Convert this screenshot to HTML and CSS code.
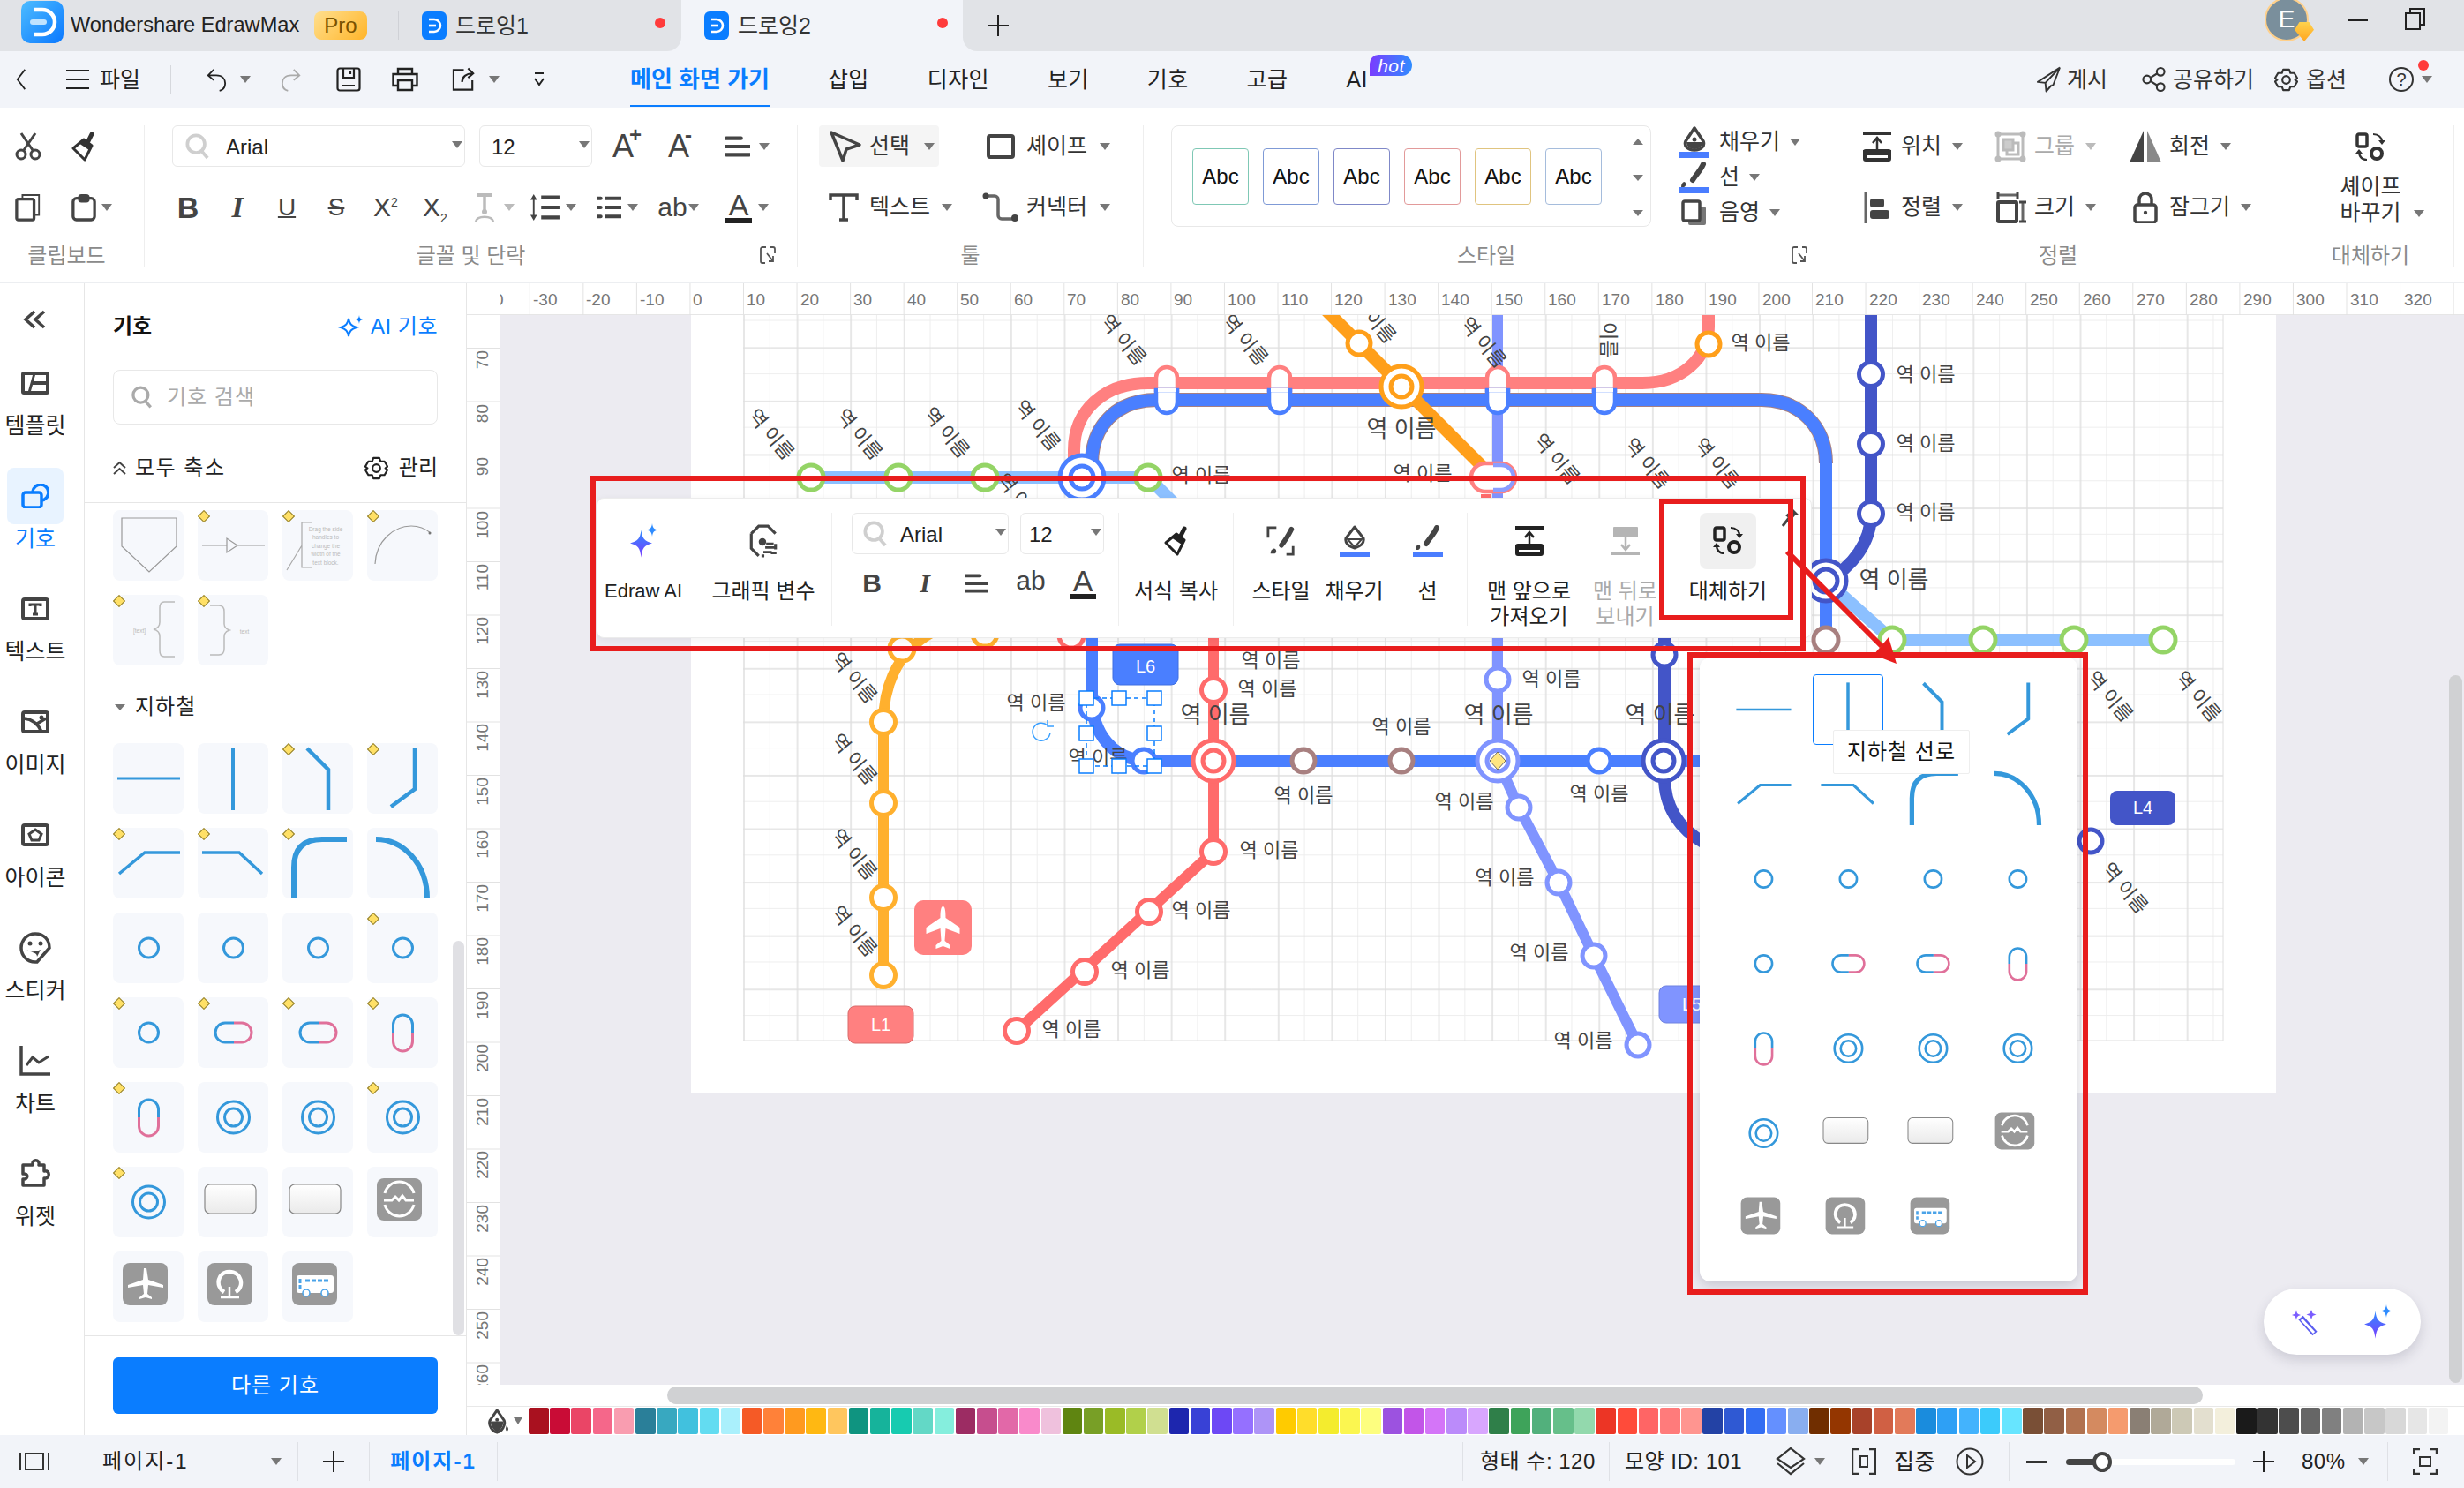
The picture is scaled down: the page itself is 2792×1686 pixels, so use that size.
FILE: index.html
```html
<!DOCTYPE html>
<html lang="ko">
<head>
<meta charset="utf-8">
<title>Wondershare EdrawMax</title>
<link rel="stylesheet" href="styles.css">
</head>
<body>
<svg class="defs" aria-hidden="true">
  <defs>
    <linearGradient id="gLogo" x1="0" y1="0" x2="1" y2="1"><stop offset="0" stop-color="#4dbcff"/><stop offset="1" stop-color="#0a78ff"/></linearGradient>
    <linearGradient id="gAi" x1="0" y1="0" x2="0" y2="1"><stop offset="0" stop-color="#2f8cff"/><stop offset="1" stop-color="#7a3cff"/></linearGradient>
    <linearGradient id="gKey" x1="0" y1="0" x2="0" y2="1"><stop offset="0" stop-color="#fff"/><stop offset="1" stop-color="#eaeaea"/></linearGradient>
  </defs>
  <symbol id="edraw" viewBox="0 0 28 32"><rect width="28" height="32" rx="6" fill="#0a7dff"/><path d="M8 9h6a7 7 0 0 1 0 14H8" fill="none" stroke="#fff" stroke-width="2.6"/><path d="M8 16h8" stroke="#fff" stroke-width="2.6"/></symbol>
  <symbol id="i-back" viewBox="0 0 14 30"><path d="M12 2 2 15l10 13" fill="none" stroke="currentColor" stroke-width="2"/></symbol>
  <symbol id="i-menu" viewBox="0 0 26 24"><path d="M0 2h26M0 12h26M0 22h26" stroke="currentColor" stroke-width="2.2"/></symbol>
  <symbol id="i-undo" viewBox="0 0 26 30"><path d="M10 3 3 10l7 6M3 10h10c8 0 11 5 11 10s-3 8-7 9" fill="none" stroke="currentColor" stroke-width="2"/></symbol>
  <symbol id="i-redo" viewBox="0 0 26 30"><path d="M16 3l7 7-7 6M23 10H13C5 10 2 15 2 20s3 8 7 9" fill="none" stroke="currentColor" stroke-width="2"/></symbol>
  <symbol id="i-save" viewBox="0 0 28 28"><path d="M4 1.5h20a2.5 2.5 0 0 1 2.5 2.5v20a2.500 2.500 0 0 1-2.500 2.500H4A2.500 2.500 0 0 1 1.500 24V4A2.500 2.500 0 0 1 4 1.500ZM8 1.500V12h12V1.500M16 5v3M7 21h14" fill="none" stroke="currentColor" stroke-width="2.200"/></symbol>
  <symbol id="i-print" viewBox="0 0 32 28"><path d="M8 8V2h16v6M8 21H2.500V8h27v13H24M8 15h16v11H8Z" fill="none" stroke="currentColor" stroke-width="2.400"/></symbol>
  <symbol id="i-export" viewBox="0 0 30 28"><path d="M14 3H2v23h22V15M12 17c0-6 5-10 12-10M19 1l6 6-6 5" fill="none" stroke="currentColor" stroke-width="2.200"/></symbol>
  <symbol id="i-more" viewBox="0 0 14 18"><path d="M2 2h10M2 8l5 7 5-7" fill="none" stroke="currentColor" stroke-width="2"/></symbol>
  <symbol id="i-send" viewBox="0 0 28 30"><path d="M27 1 1 18l9 1 1 10 6-7M27 1 10 19M27 1l-8 21-2 0" fill="none" stroke="currentColor" stroke-width="2" stroke-linejoin="round"/></symbol>
  <symbol id="i-share" viewBox="0 0 28 30"><g fill="none" stroke="currentColor" stroke-width="2.200"><circle cx="22" cy="6" r="4.500"/><circle cx="6" cy="15" r="4.500"/><circle cx="22" cy="24" r="4.500"/><path d="m10 13 8-5M10 17l8 5"/></g></symbol>
  <symbol id="i-gear" viewBox="0 0 28 28"><g fill="none" stroke="currentColor" stroke-width="2.200" stroke-linejoin="round"><path d="M10.500 2h7L19 6h4.500L27 12l-2.500 2 2.500 2-3.500 6H19l-1.500 4h-7L9 22H4.500L1 16l2.500-2L1 12l3.500-6H9Z"/><circle cx="14" cy="14" r="4.500"/></g></symbol>
  <symbol id="i-cut" viewBox="0 0 30 32"><g fill="none" stroke="#444" stroke-width="3"><circle cx="7" cy="25" r="5"/><circle cx="23" cy="25" r="5"/><path d="M10 20 23 1M20 20 7 1"/></g></symbol>
  <symbol id="i-brush" viewBox="0 0 32 34"><path d="m25 3-4 8" stroke="currentColor" stroke-width="5" stroke-linecap="round"/><path d="M16 9l9 7-8 16L4 19Z" fill="none" stroke="currentColor" stroke-width="3" stroke-linejoin="round"/><path d="m16 9 9 7-3 5-12-8Z" fill="currentColor"/></symbol>
  <symbol id="i-copy" viewBox="0 0 32 34"><path d="M9 7V2h20v24h-5" fill="none" stroke="#444" stroke-width="2"/><rect x="2" y="7" width="21" height="25" rx="2" fill="none" stroke="#444" stroke-width="3.500"/></symbol>
  <symbol id="i-paste" viewBox="0 0 30 34"><rect x="2" y="6" width="26" height="26" rx="4" fill="none" stroke="#444" stroke-width="3.500"/><rect x="8" y="1" width="14" height="10" rx="4" fill="#444"/></symbol>
  <symbol id="i-search" viewBox="0 0 30 32"><g fill="none" stroke="currentColor" stroke-width="4"><circle cx="13" cy="13" r="10.500"/><path d="m20 22 7 8"/></g></symbol>
  <symbol id="i-align" viewBox="0 0 30 26"><path d="M1 3h18M1 13h28M1 23h28" stroke="#444" stroke-width="4.500" stroke-linecap="round"/></symbol>
  <symbol id="i-lspace" viewBox="0 0 36 34"><path d="M14 5h22M14 17h22M14 29h22" stroke="#444" stroke-width="4.500"/><path d="M5 4v26" stroke="#444" stroke-width="2"/><path d="M1 8l4-7 4 7ZM1 26l4 7 4-7Z" fill="#444"/></symbol>
  <symbol id="i-list" viewBox="0 0 30 30"><path d="M10 4h20M10 15h20M10 26h20" stroke="#444" stroke-width="4.500"/><path d="M0 4h5M0 15h5M0 26h5" stroke="#444" stroke-width="4.500" stroke-linecap="round"/></symbol>
  <symbol id="i-tdir" viewBox="0 0 24 34"><path d="M3 3h18" stroke="#bbb" stroke-width="4"/><path d="M12 3v18" stroke="#bbb" stroke-width="3.500"/><circle cx="12" cy="22" r="3" fill="#bbb"/><path d="M2 33c2-7 18-7 20 0" fill="none" stroke="#bbb" stroke-width="2.500"/></symbol>
  <symbol id="i-cursor" viewBox="0 0 38 38"><path d="M3 3l32 14-15 5-4 13Z" fill="none" stroke="#444" stroke-width="3.500" stroke-linejoin="round"/></symbol>
  <symbol id="i-shape" viewBox="0 0 32 28"><rect x="2" y="2" width="28" height="24" rx="2" fill="none" stroke="#444" stroke-width="4"/></symbol>
  <symbol id="i-text" viewBox="0 0 34 32"><path d="M2 8V2h30v6M17 2v28M12 30h10" fill="none" stroke="#444" stroke-width="3.500"/></symbol>
  <symbol id="i-conn" viewBox="0 0 41 34"><path d="M4 4h10a4 4 0 0 1 4 4v18a4 4 0 0 0 4 4h15" fill="none" stroke="#666" stroke-width="3.500"/><circle cx="4" cy="4" r="3.500" fill="#444"/><circle cx="37" cy="29" r="4" fill="#444"/></symbol>
  <symbol id="i-fill" viewBox="0 0 34 36"><path d="M17 2 27 17c2 5-2 10-10 10S5 22 7 17Z" fill="none" stroke="#444" stroke-width="3.500" stroke-linejoin="round"/><path d="M8 18h18c0 5-4 8-9 8s-9-3-9-8Z" fill="#444"/><circle cx="17" cy="15" r="2.500" fill="#444"/><rect y="29" width="34" height="7" fill="#4a7dff"/></symbol>
  <symbol id="i-nib" viewBox="0 0 26 32"><path d="M11 2 20 15c2 6-3 14-9 15C5 29 0 21 2 15Z" fill="none" stroke="#444" stroke-width="3.200" stroke-linejoin="round"/><path d="M3 16h16c0 6-4 12-8 13-4-1-8-7-8-13Z" fill="#444"/><circle cx="11" cy="14" r="2.200" fill="#444"/><path d="M23 21c2 3 3 5 1 7-2 1-3-3-1-7Z" fill="#444"/></symbol>
  <symbol id="i-line" viewBox="0 0 34 36"><path d="M27 3C24 10 18 16 15 21" fill="none" stroke="#444" stroke-width="6" stroke-linecap="round"/><path d="M5 23c3 0 3 5 0 6H2c0-3 1-5 3-6Z" fill="#444"/><rect y="29" width="34" height="7" fill="#4a7dff"/></symbol>
  <symbol id="i-shadow" viewBox="0 0 30 30"><rect x="8" y="8" width="20" height="21" rx="2" fill="#777"/><rect x="2" y="2" width="19" height="22" rx="2" fill="#fff" stroke="#444" stroke-width="3.500"/></symbol>
  <symbol id="i-front" viewBox="0 0 32 34"><rect width="32" height="4" fill="currentColor"/><path d="M16 24V8M11 13l5-6 5 6" fill="none" stroke="currentColor" stroke-width="2.500"/><rect x="2" y="22" width="28" height="10" rx="1" fill="#fff" stroke="currentColor" stroke-width="4"/><rect y="21" width="32" height="6" fill="currentColor"/></symbol>
  <symbol id="i-back2" viewBox="0 0 32 34"><rect x="2" y="1" width="28" height="12" rx="1" fill="currentColor"/><path d="M16 12v14M11 21l5 6 5-6" fill="none" stroke="currentColor" stroke-width="2.500"/><rect y="29" width="32" height="4" fill="currentColor"/></symbol>
  <symbol id="i-group" viewBox="0 0 36 36"><g fill="none" stroke="#bbb" stroke-width="3"><rect x="4" y="4" width="28" height="28"/><rect x="10" y="10" width="11" height="12" fill="#ccc"/><path d="M22 14h5v13H14v-4"/></g><g fill="#bbb"><circle cx="4" cy="4" r="3.500"/><circle cx="32" cy="4" r="3.500"/><circle cx="4" cy="32" r="3.500"/><circle cx="32" cy="32" r="3.500"/></g></symbol>
  <symbol id="i-rotate" viewBox="0 0 36 36"><path d="M16 0v36H0Z" fill="#444"/><path d="M20 0v36h16Z" fill="#888"/></symbol>
  <symbol id="i-alignl" viewBox="0 0 30 36"><path d="M2 0v36" stroke="#666" stroke-width="3"/><rect x="7" y="8" width="16" height="10" rx="3" fill="#444"/><rect x="7" y="21" width="22" height="10" rx="3" fill="#444"/></symbol>
  <symbol id="i-size" viewBox="0 0 32 36"><path d="M2 4h22M30 12v22" stroke="#666" stroke-width="3"/><path d="M2 0v8M24 0v8M26 12h8M26 34h8" stroke="#444" stroke-width="3"/><rect x="2" y="12" width="21" height="22" rx="1" fill="none" stroke="#444" stroke-width="4"/></symbol>
  <symbol id="i-lock" viewBox="0 0 28 36"><path d="M7 16V9a7 7 0 0 1 14 0v7" fill="none" stroke="#444" stroke-width="3.500"/><rect x="2" y="15" width="24" height="20" rx="3" fill="none" stroke="#444" stroke-width="3.500"/><circle cx="14" cy="24" r="2.200" fill="#444"/></symbol>
  <symbol id="i-replace" viewBox="0 0 34 34"><g fill="none" stroke="currentColor"><rect x="2" y="2" width="11" height="14" rx="2" stroke-width="3.500"/><circle cx="24" cy="24" r="6" stroke-width="4"/><path d="M20 2c6 0 10 4 10 8M4 21c0 6 3 10 9 10" stroke-width="2.200"/></g><path d="m26 9 4 5 4-5ZM0 24l4-5 4 5Z" fill="currentColor"/></symbol>
  <symbol id="i-launch" viewBox="0 0 18 22"><path d="M7 2H3a2 2 0 0 0-2 2v14a2 2 0 0 0 2 2h3M12 2h3a2 2 0 0 1 2 2v5" fill="none" stroke="#555" stroke-width="1.800"/><path d="m8 9 7 9M15 12v6h-5" fill="none" stroke="#555" stroke-width="1.800"/></symbol>
  <symbol id="i-var" viewBox="0 0 30 36"><path d="M2 10 10 2h10l8 8M28 21v6M2 10v16l8 8M13 34h3" fill="none" stroke="#444" stroke-width="3"/><circle cx="14" cy="19" r="4" fill="#444"/><path d="M17 25h12M23 31h6M18 21h8M24 30H15" stroke="#444" stroke-width="2.500"/></symbol>
  <symbol id="i-style" viewBox="0 0 36 36"><path d="M12 2H2v12M24 34h8V24" fill="none" stroke="#444" stroke-width="3"/><path d="M30 4c-3 6-7 13-12 19" fill="none" stroke="#444" stroke-width="6" stroke-linecap="round"/><path d="M9 27c3 0 4 5 1 6H5c0-3 1-5 4-6Z" fill="#444"/></symbol>
  <symbol id="i-fillf" viewBox="0 0 34 36"><path d="M17 2 27 15c1 5-3 9-10 11C10 24 6 20 7 15Z" fill="none" stroke="#444" stroke-width="3" stroke-linejoin="round"/><path d="M9 16h16l-8 9Z" fill="none" stroke="#444" stroke-width="2"/><rect y="31" width="34" height="5" fill="#4a7dff"/></symbol>
  <symbol id="i-linef" viewBox="0 0 34 36"><path d="M27 3C24 10 18 16 15 21" fill="none" stroke="#444" stroke-width="6" stroke-linecap="round"/><path d="M6 22c3 0 3 5 0 6H3c0-3 1-5 3-6Z" fill="#444"/><rect y="31" width="34" height="5" fill="#4a7dff"/></symbol>
  <symbol id="i-pin" viewBox="0 0 20 24"><path d="M1 22 8 13" stroke="#444" stroke-width="3"/><path d="M4 10l6-5 1-4 8 8-4 1-5 6-1-2Z" fill="#444"/></symbol>
  <symbol id="i-star" viewBox="0 0 32 32"><path d="M14 6c1 8 3 10 10 12-7 2-9 4-10 13-1-9-3-11-10-13 7-2 9-4 10-12Z" fill="url(#gAi)"/><path d="M24 0c.5 4 1.500 5 5 6-3.500 1-4.500 2-5 6-.5-4-1.500-5-5-6 3.500-1 4.500-2 5-6Z" fill="#2f8cff"/></symbol>
  <symbol id="i-aistar" viewBox="0 0 32 26"><path d="M14 4c1 6 3 8 9 10-6 2-8 4-9 10-1-6-3-8-9-10 6-2 8-4 9-10Z" fill="none" stroke="#0a7dff" stroke-width="2"/><path d="M26 0c.4 3 1 4 4 5-3 1-3.600 2-4 5-.4-3-1-4-4-5 3-1 3.600-2 4-5Z" fill="#0a7dff"/></symbol>
  <symbol id="i-magic" viewBox="0 0 36 36"><path d="M14 13 30 31" stroke="#5a5cf0" stroke-width="7"/><path d="M15 15 29 30" stroke="#fff" stroke-width="3"/><path d="M9 4c.5 4 1.500 5 5 6-3.500 1-4.500 2-5 6-.5-4-1.500-5-5-6 3.500-1 4.500-2 5-6ZM26 4l1.500 4 4 1.500-4 1.500-1.500 4-1.500-4-4-1.500 4-1.500Z" fill="#7a5cff"/></symbol>
  <symbol id="r-tpl" viewBox="0 0 32 26"><rect width="32" height="26" rx="3" fill="#444"/><path d="M4 4h9L8 22H4ZM16 4h12v7H14ZM13 15h15v7H11Z" fill="#fff"/></symbol>
  <symbol id="r-sym" viewBox="0 0 32 28"><path d="M13 9a9 9 0 1 1 10 10" fill="none" stroke="currentColor" stroke-width="3.500"/><rect x="2" y="10" width="21" height="17" rx="3" fill="none" stroke="currentColor" stroke-width="3.500"/></symbol>
  <symbol id="r-text" viewBox="0 0 32 26"><rect x="2" y="2" width="28" height="22" rx="2" fill="none" stroke="#444" stroke-width="4"/><path d="M10 10V8h12v2M16 8v11M13 19h6" fill="none" stroke="#444" stroke-width="3"/></symbol>
  <symbol id="r-img" viewBox="0 0 32 26"><rect x="2" y="2" width="28" height="22" rx="2" fill="none" stroke="#444" stroke-width="4"/><path d="M3 9c10 1 16 6 20 15M18 15l10-6" fill="none" stroke="#444" stroke-width="3.500"/><circle cx="23" cy="8" r="2.500" fill="#444"/></symbol>
  <symbol id="r-icon" viewBox="0 0 32 26"><rect x="2" y="2" width="28" height="22" rx="2" fill="none" stroke="#444" stroke-width="4"/><path d="m16 7 7 5-3 7h-8l-3-7Z" fill="none" stroke="#444" stroke-width="3"/></symbol>
  <symbol id="r-stick" viewBox="0 0 36 36"><path d="M18 34C8 34 2 26 2 18S8 2 18 2s16 7 16 16L20 34Z" fill="none" stroke="#444" stroke-width="3.500"/><circle cx="12" cy="13" r="2.500" fill="#444"/><circle cx="24" cy="13" r="2.500" fill="#444"/><path d="M8 20c5 4 12 2 16 0l-4 8c0-5-5-4-12-8Z" fill="#444"/></symbol>
  <symbol id="r-chart" viewBox="0 0 36 34"><path d="M2 0v32h33" fill="none" stroke="#444" stroke-width="3.500"/><path d="m8 22 7-9 7 6 11-7" fill="none" stroke="#444" stroke-width="3"/></symbol>
  <symbol id="r-widget" viewBox="0 0 34 34"><path d="M9 7h5c-2-7 9-7 7 0h6v7c7-2 7 9 0 8v8H3v-7c6 1 7-7 0-6V7Z" fill="none" stroke="#444" stroke-width="3.500" stroke-linejoin="round"/></symbol>

  <symbol id="s-pent" viewBox="0 0 80 80"><path d="M10 9h62v32L41 70 10 41Z" fill="none" stroke="#999" stroke-width="1.200"/></symbol>
  <symbol id="s-arrow" viewBox="0 0 80 80"><path d="M5 40h28M45 40h31M33 32v16l12-8Z" fill="none" stroke="#999" stroke-width="1.200"/></symbol>
  <symbol id="s-arc" viewBox="0 0 80 80"><path d="M9 61C10 35 30 18 50 18c8 0 16 3 22 8" fill="none" stroke="#999" stroke-width="1.200"/><circle cx="71" cy="26" r="1.500" fill="#777"/></symbol>
  <symbol id="s-l1" viewBox="0 0 80 80"><path d="M5 40h71" fill="none" stroke="#3498db" stroke-width="3"/></symbol>
  <symbol id="s-l2" viewBox="0 0 80 80"><path d="M40 5v71" fill="none" stroke="#3498db" stroke-width="4"/></symbol>
  <symbol id="s-l3" viewBox="0 0 80 80"><path d="m28 6 24 24v46" fill="none" stroke="#3498db" stroke-width="4.500"/></symbol>
  <symbol id="s-l4" viewBox="0 0 80 80"><path d="M54 5v47L27 72" fill="none" stroke="#3498db" stroke-width="4.500"/></symbol>
  <symbol id="s-l5" viewBox="0 0 80 80"><path d="M7 52 36 28h40" fill="none" stroke="#3498db" stroke-width="3.500"/></symbol>
  <symbol id="s-l6" viewBox="0 0 80 80"><path d="M5 28h42l26 24" fill="none" stroke="#3498db" stroke-width="3.500"/></symbol>
  <symbol id="s-l7" viewBox="0 0 80 80"><path d="M13 80V45q0-32 32-32h28" fill="none" stroke="#3498db" stroke-width="6"/></symbol>
  <symbol id="s-l8" viewBox="0 0 80 80"><path d="M10 13c30 0 58 27 58 67" fill="none" stroke="#3498db" stroke-width="6"/></symbol>
  <symbol id="s-c" viewBox="0 0 80 80"><circle cx="40.500" cy="40" r="11" fill="none" stroke="#3498db" stroke-width="3"/></symbol>
  <symbol id="s-ph" viewBox="0 0 80 80"><path d="M41 29H31a11 11 0 0 0 0 22h10" fill="none" stroke="#3498db" stroke-width="3"/><path d="M41 29h9a11 11 0 0 1 0 22h-9" fill="none" stroke="#e0709a" stroke-width="3"/></symbol>
  <symbol id="s-pv" viewBox="0 0 80 80"><path d="M29.500 40V31a11 11 0 0 1 22 0v9" fill="none" stroke="#3498db" stroke-width="3"/><path d="M29.500 40v10a11 11 0 0 0 22 0V40" fill="none" stroke="#e0709a" stroke-width="3"/></symbol>
  <symbol id="s-ring" viewBox="0 0 80 80"><g fill="none" stroke="#3498db" stroke-width="3"><circle cx="40.500" cy="40" r="18"/><circle cx="40.500" cy="40" r="10"/></g></symbol>
  <symbol id="s-key" viewBox="0 0 80 80"><rect x="8" y="20" width="58" height="33" rx="6" fill="url(#gKey)" stroke="#888" stroke-width="1.200"/></symbol>
  <symbol id="s-metro" viewBox="0 0 80 80"><rect x="11" y="13" width="51" height="48" rx="8" fill="#999"/><g fill="none" stroke="#fff" stroke-width="3"><path d="M20 30a17 17 0 0 1 33 0M20 43a17 17 0 0 0 33 0"/><path d="M19 38h9l4-4 4 4 4-5 4 5h9"/></g></symbol>
  <symbol id="s-plane" viewBox="0 0 80 80"><rect x="11" y="13" width="51" height="48" rx="8" fill="#999"/><path d="M35 19h3l2 13 17 6v3l-17-3-1 10 5 4v2l-7-2-7 2v-2l5-4-1-10-17 3v-3l17-6Z" fill="#fff"/></symbol>
  <symbol id="s-rail" viewBox="0 0 80 80"><rect x="11" y="13" width="51" height="48" rx="8" fill="#999"/><path d="M30 46c-11-7-7-23 6-23s18 16 7 23" fill="none" stroke="#fff" stroke-width="4.500"/><path d="M26 52h21M36 40v12" stroke="#fff" stroke-width="2.500"/></symbol>
  <symbol id="s-bus" viewBox="0 0 80 80"><rect x="11" y="13" width="51" height="48" rx="8" fill="#999"/><rect x="16" y="27" width="42" height="20" rx="3" fill="#fff"/><path d="M20 31v11M26 33h28" stroke="#4aa3e8" stroke-width="3" stroke-dasharray="5 2"/><circle cx="27" cy="47" r="4" fill="#fff" stroke="#4aa3e8" stroke-width="1.500"/><circle cx="48" cy="47" r="4" fill="#fff" stroke="#4aa3e8" stroke-width="1.500"/></symbol>
</svg>

<header class="titlebar">
  <div class="tb-left">
    <svg class="app-logo" width="48" height="48" viewBox="0 0 48 48"><rect width="48" height="48" rx="10" fill="url(#gLogo)"/><path d="M14 10h10a14 14 0 0 1 0 28H14" fill="none" stroke="#fff" stroke-width="4.500"/><path d="M13 24h13" stroke="#bfe3ff" stroke-width="6" stroke-linecap="round"/></svg>
    <span class="app-name">Wondershare EdrawMax</span>
    <span class="pro">Pro</span>
    <span class="tb-sep"></span>
    <div class="doc-tab doc-first">
      <svg width="28" height="32"><use href="#edraw"/></svg>
      <span>드로잉1</span>
      <i class="dot"></i>
    </div>
  </div>
  <div class="doc-tab doc-active">
    <svg width="28" height="32"><use href="#edraw"/></svg>
    <span>드로잉2</span>
    <i class="dot"></i>
  </div>
  <div class="tb-right">
    <span class="plus newtab"></span>
    <div class="avatar">E<i class="vip"></i></div>
    <span class="win-min"></span>
    <span class="win-max"></span>
  </div>
</header>

<nav class="menubar">
  <svg class="nb-back" width="12" height="30"><use href="#i-back"/></svg>
  <svg class="nb-menu" width="26" height="24"><use href="#i-menu"/></svg>
  <span class="nb-file">파일</span>
  <span class="nb-sep sep-a"></span>
  <svg class="nb-undo" width="24" height="30"><use href="#i-undo"/></svg>
  <i class="caret c-undo"></i>
  <svg class="nb-redo" width="24" height="30"><use href="#i-redo"/></svg>
  <svg class="nb-save" width="28" height="28"><use href="#i-save"/></svg>
  <svg class="nb-print" width="32" height="28"><use href="#i-print"/></svg>
  <svg class="nb-export" width="29" height="28"><use href="#i-export"/></svg>
  <i class="caret c-export"></i>
  <svg class="nb-more" width="14" height="18"><use href="#i-more"/></svg>
  <span class="nb-sep sep-b"></span>
  <div class="tabs">
    <a class="tab on">메인 화면 가기</a>
    <a class="tab">삽입</a>
    <a class="tab">디자인</a>
    <a class="tab">보기</a>
    <a class="tab">기호</a>
    <a class="tab">고급</a>
    <a class="tab tab-ai">AI<b class="hot">hot</b></a>
  </div>
  <div class="nb-right">
    <svg width="27" height="30"><use href="#i-send"/></svg><span class="nb-t1">게시</span>
    <svg class="nb-share" width="27" height="30"><use href="#i-share"/></svg><span class="nb-t2">공유하기</span>
    <svg class="nb-gear" width="27" height="27"><use href="#i-gear"/></svg><span class="nb-t3">옵션</span>
    <span class="help">?<i class="help-dot"></i></span>
    <i class="caret c-help"></i>
  </div>
</nav>

<section class="ribbon">
  <div class="rg rg-clip">
    <div class="rg-body">
      <div class="rw">
        <svg class="cl-a" width="30" height="32"><use href="#i-cut"/></svg>
        <svg class="cl-b" width="32" height="34"><use href="#i-brush"/></svg>
      </div>
      <div class="rw">
        <svg class="cl-a" width="30" height="32"><use href="#i-copy"/></svg>
        <svg class="cl-c" width="28" height="32"><use href="#i-paste"/></svg>
        <i class="caret cl-car"></i>
      </div>
    </div>
    <div class="rg-label">클립보드</div>
  </div>

  <div class="rg rg-font">
    <div class="rg-body">
      <div class="rw">
        <div class="fld fld-font"><svg class="gs" width="28" height="30"><use href="#i-search"/></svg><span>Arial</span><i class="caret"></i></div>
        <div class="fld fld-size"><span>12</span><i class="caret"></i></div>
        <span class="glyph g-ap">A<sup>+</sup></span>
        <span class="glyph g-am">A<sup>-</sup></span>
        <svg class="g-al" width="28" height="26"><use href="#i-align"/></svg>
        <i class="caret g-alc"></i>
      </div>
      <div class="rw rw-fmt">
        <b class="fmt">B</b>
        <i class="fmt f-i">I</i>
        <u class="fmt f-u">U</u>
        <s class="fmt f-s">S</s>
        <span class="fmt f-x">X<sup>2</sup></span>
        <span class="fmt f-x">X<sub>2</sub></span>
        <svg class="f-t" width="24" height="34"><use href="#i-tdir"/></svg>
        <i class="caret car-t"></i>
        <svg class="ic-ls" width="34" height="32"><use href="#i-lspace"/></svg>
        <i class="caret car-ls"></i>
        <svg class="ic-li" width="28" height="28"><use href="#i-list"/></svg>
        <i class="caret car-li"></i>
        <span class="f-ab">ab</span>
        <i class="caret car-ab"></i>
        <span class="f-a">A</span>
        <i class="caret car-a"></i>
      </div>
    </div>
    <div class="rg-label">글꼴 및 단락</div>
    <svg class="launch" width="18" height="22"><use href="#i-launch"/></svg>
  </div>

  <div class="rg rg-tools">
    <div class="rg-body">
      <div class="rw">
        <div class="tool tool-sel"><svg width="38" height="38"><use href="#i-cursor"/></svg><span>선택</span><i class="caret"></i></div>
        <div class="tool tool-b"><span class="ibox"><svg width="32" height="28"><use href="#i-shape"/></svg></span><span>셰이프</span><i class="caret"></i></div>
      </div>
      <div class="rw">
        <div class="tool tool-t"><svg width="34" height="32"><use href="#i-text"/></svg><span>텍스트</span><i class="caret"></i></div>
        <div class="tool tool-b"><span class="ibox"><svg width="41" height="34"><use href="#i-conn"/></svg></span><span>커넥터</span><i class="caret"></i></div>
      </div>
    </div>
    <div class="rg-label">툴</div>
  </div>

  <div class="rg rg-style">
    <div class="rg-body st-body">
      <div class="gallery">
        <div class="abc a1">Abc</div><div class="abc a2">Abc</div><div class="abc a3">Abc</div><div class="abc a4">Abc</div><div class="abc a5">Abc</div><div class="abc a6">Abc</div>
        <div class="gal-arrows"><i class="up"></i><i class="dn"></i><i class="dm"></i></div>
      </div>
      <div class="fls">
        <div class="fl"><svg width="34" height="36"><use href="#i-fill"/></svg><span>채우기</span><i class="caret"></i></div>
        <div class="fl"><svg width="34" height="36"><use href="#i-line"/></svg><span>선</span><i class="caret"></i></div>
        <div class="fl"><svg width="30" height="30"><use href="#i-shadow"/></svg><span>음영</span><i class="caret"></i></div>
      </div>
    </div>
    <div class="rg-label">스타일</div>
    <svg class="launch l2" width="18" height="22"><use href="#i-launch"/></svg>
  </div>

  <div class="rg rg-arr">
    <div class="rg-body">
      <div class="rw">
        <div class="at at1"><svg width="32" height="34"><use href="#i-front"/></svg><span>위치</span><i class="caret"></i></div>
        <div class="at at2 off"><svg width="36" height="36"><use href="#i-group"/></svg><span>그룹</span><i class="caret"></i></div>
        <div class="at at3"><svg width="36" height="36"><use href="#i-rotate"/></svg><span>회전</span><i class="caret"></i></div>
      </div>
      <div class="rw">
        <div class="at at1"><svg width="32" height="36"><use href="#i-alignl"/></svg><span>정렬</span><i class="caret"></i></div>
        <div class="at at2"><svg width="36" height="36"><use href="#i-size"/></svg><span>크기</span><i class="caret"></i></div>
        <div class="at at3"><svg width="36" height="36"><use href="#i-lock"/></svg><span>잠그기</span><i class="caret"></i></div>
      </div>
    </div>
    <div class="rg-label">정렬</div>
  </div>

  <div class="rg rg-rep">
    <div class="rg-body rep-body">
      <svg width="34" height="34"><use href="#i-replace"/></svg>
      <span class="rep-l1">셰이프</span>
      <span class="rep-l2">바꾸기<i class="caret"></i></span>
    </div>
    <div class="rg-label">대체하기</div>
  </div>
</section>

<main class="main">
  <aside class="rail">
    <svg class="rail-col" width="30" height="24" viewBox="0 0 30 24"><path d="M14 3 4 12l10 9M25 3 15 12l10 9" fill="none" stroke="#444" stroke-width="3.500"/></svg>
    <div class="rail-i"><span class="rail-ic"><svg width="32" height="26"><use href="#r-tpl"/></svg></span><span>템플릿</span></div>
    <div class="rail-i on"><span class="rail-ic"><svg width="32" height="28"><use href="#r-sym"/></svg></span><span>기호</span></div>
    <div class="rail-i"><span class="rail-ic"><svg width="32" height="26"><use href="#r-text"/></svg></span><span>텍스트</span></div>
    <div class="rail-i"><span class="rail-ic"><svg width="32" height="26"><use href="#r-img"/></svg></span><span>이미지</span></div>
    <div class="rail-i"><span class="rail-ic"><svg width="32" height="26"><use href="#r-icon"/></svg></span><span>아이콘</span></div>
    <div class="rail-i"><span class="rail-ic"><svg width="36" height="36"><use href="#r-stick"/></svg></span><span>스티커</span></div>
    <div class="rail-i"><span class="rail-ic"><svg width="36" height="34"><use href="#r-chart"/></svg></span><span>차트</span></div>
    <div class="rail-i"><span class="rail-ic"><svg width="34" height="34"><use href="#r-widget"/></svg></span><span>위젯</span></div>
  </aside>

  <aside class="panel">
    <div class="p-head"><strong>기호</strong><span class="ai-sym"><svg width="32" height="26"><use href="#i-aistar"/></svg>AI 기호</span></div>
    <div class="p-search"><svg width="26" height="26"><use href="#i-search"/></svg><span>기호 검색</span></div>
    <div class="p-tools">
      <span class="fold"><svg width="15" height="16" viewBox="0 0 15 16"><path d="M1 8l6.500-6L14 8M1 15l6.500-6L14 15" fill="none" stroke="#444" stroke-width="2"/></svg>모두 축소</span>
      <span class="manage"><svg width="27" height="27"><use href="#i-gear"/></svg>관리</span>
    </div>
    <div class="p-scroll">
      <div class="tiles">
        <div class="tile"><svg><use href="#s-pent"/></svg></div>
        <div class="tile d"><svg><use href="#s-arrow"/></svg></div>
        <div class="tile d"><svg viewBox="0 0 80 80"><path d="M34 14H22v51h12M22 40 5 68" fill="none" stroke="#aaa" stroke-width="1.200"/><g class="tiny"><text x="49" y="24">Drag the side</text><text x="49" y="33">handles to</text><text x="49" y="43">change the</text><text x="49" y="52">width of the</text><text x="49" y="62">text block.</text></g></svg></div>
        <div class="tile d"><svg><use href="#s-arc"/></svg></div>
        <div class="tile d"><svg viewBox="0 0 80 80"><path d="M70 8H58c-4 0-5 3-5 7v16c0 4-3 7-7 8 4 1 7 4 7 8v16c0 4 1 7 5 7h12" fill="none" stroke="#bbb" stroke-width="1.500"/><text class="tiny" x="30" y="43">[text]</text></svg></div>
        <div class="tile d"><svg viewBox="0 0 80 80"><path d="M14 12h10c4 0 6 3 6 7v14c0 4 3 6 6 7-3 1-6 3-6 7v14c0 4-2 7-6 7H14" fill="none" stroke="#bbb" stroke-width="1.500"/><text class="tiny" x="53" y="44">text</text></svg></div>
      </div>
      <div class="sec"><i class="tri"></i>지하철</div>
      <div class="tiles">
        <div class="tile"><svg><use href="#s-l1"/></svg></div>
        <div class="tile"><svg><use href="#s-l2"/></svg></div>
        <div class="tile d"><svg><use href="#s-l3"/></svg></div>
        <div class="tile d"><svg><use href="#s-l4"/></svg></div>
        <div class="tile d"><svg><use href="#s-l5"/></svg></div>
        <div class="tile d"><svg><use href="#s-l6"/></svg></div>
        <div class="tile d"><svg><use href="#s-l7"/></svg></div>
        <div class="tile"><svg><use href="#s-l8"/></svg></div>
        <div class="tile"><svg><use href="#s-c"/></svg></div>
        <div class="tile"><svg><use href="#s-c"/></svg></div>
        <div class="tile"><svg><use href="#s-c"/></svg></div>
        <div class="tile d"><svg><use href="#s-c"/></svg></div>
        <div class="tile d"><svg><use href="#s-c"/></svg></div>
        <div class="tile d"><svg><use href="#s-ph"/></svg></div>
        <div class="tile d"><svg><use href="#s-ph"/></svg></div>
        <div class="tile d"><svg><use href="#s-pv"/></svg></div>
        <div class="tile d"><svg><use href="#s-pv"/></svg></div>
        <div class="tile"><svg><use href="#s-ring"/></svg></div>
        <div class="tile"><svg><use href="#s-ring"/></svg></div>
        <div class="tile d"><svg><use href="#s-ring"/></svg></div>
        <div class="tile d"><svg><use href="#s-ring"/></svg></div>
        <div class="tile"><svg><use href="#s-key"/></svg></div>
        <div class="tile"><svg><use href="#s-key"/></svg></div>
        <div class="tile"><svg><use href="#s-metro"/></svg></div>
        <div class="tile"><svg><use href="#s-plane"/></svg></div>
        <div class="tile"><svg><use href="#s-rail"/></svg></div>
        <div class="tile"><svg><use href="#s-bus"/></svg></div>
      </div>
      <i class="p-bar"></i>
    </div>
    <div class="p-foot"><button class="more">다른 기호</button></div>
  </aside>

  <section class="work">
    <div class="ruler-top">
      <svg class="rt" width="2227" height="36" viewBox="565 321 2227 36">
        <defs><pattern id="tickx" patternUnits="userSpaceOnUse" x="538.250" y="0" width="60.55" height="36"><path d="M.5 0v36" stroke="#e2e2e2"/></pattern></defs>
        <rect x="565" y="321" width="2227" height="36" fill="url(#tickx)"/>
        <g class="rn">
          <text x="542" y="346">-40</text><text x="603" y="346">-30</text><text x="663" y="346">-20</text><text x="724" y="346">-10</text><text x="784" y="346">0</text><text x="845" y="346">10</text><text x="906" y="346">20</text><text x="966" y="346">30</text><text x="1027" y="346">40</text><text x="1087" y="346">50</text><text x="1148" y="346">60</text><text x="1208" y="346">70</text><text x="1269" y="346">80</text><text x="1329" y="346">90</text><text x="1390" y="346">100</text><text x="1451" y="346">110</text><text x="1511" y="346">120</text><text x="1572" y="346">130</text><text x="1632" y="346">140</text><text x="1693" y="346">150</text><text x="1753" y="346">160</text><text x="1814" y="346">170</text><text x="1875" y="346">180</text><text x="1935" y="346">190</text><text x="1996" y="346">200</text><text x="2056" y="346">210</text><text x="2117" y="346">220</text><text x="2177" y="346">230</text><text x="2238" y="346">240</text><text x="2299" y="346">250</text><text x="2359" y="346">260</text><text x="2420" y="346">270</text><text x="2480" y="346">280</text><text x="2541" y="346">290</text><text x="2601" y="346">300</text><text x="2662" y="346">310</text><text x="2723" y="346">320</text>
        </g>
      </svg>
    </div>
    <div class="work-mid">
      <svg class="rl" width="37" height="1212" viewBox="528 357 37 1212">
        <defs><pattern id="ticky" patternUnits="userSpaceOnUse" x="0" y="394" width="37" height="60.5"><path d="M0 .5h37" stroke="#e2e2e2"/></pattern></defs>
        <rect x="528" y="357" width="37" height="1212" fill="url(#ticky)"/>
        <g class="rn rv">
          <text transform="rotate(-90 552 397)" x="552" y="397">70</text><text transform="rotate(-90 552 458)" x="552" y="458">80</text><text transform="rotate(-90 552 518)" x="552" y="518">90</text><text transform="rotate(-90 552 579)" x="552" y="579">100</text><text transform="rotate(-90 552 639)" x="552" y="639">110</text><text transform="rotate(-90 552 699)" x="552" y="699">120</text><text transform="rotate(-90 552 760)" x="552" y="760">130</text><text transform="rotate(-90 552 820)" x="552" y="820">140</text><text transform="rotate(-90 552 881)" x="552" y="881">150</text><text transform="rotate(-90 552 941)" x="552" y="941">160</text><text transform="rotate(-90 552 1002)" x="552" y="1002">170</text><text transform="rotate(-90 552 1062)" x="552" y="1062">180</text><text transform="rotate(-90 552 1123)" x="552" y="1123">190</text><text transform="rotate(-90 552 1183)" x="552" y="1183">200</text><text transform="rotate(-90 552 1244)" x="552" y="1244">210</text><text transform="rotate(-90 552 1304)" x="552" y="1304">220</text><text transform="rotate(-90 552 1365)" x="552" y="1365">230</text><text transform="rotate(-90 552 1425)" x="552" y="1425">240</text><text transform="rotate(-90 552 1486)" x="552" y="1486">250</text><text transform="rotate(-90 552 1546)" x="552" y="1546">260</text>
        </g>
      </svg>
      <div class="canvas">
        <svg class="diagram" width="2227" height="1212" viewBox="565 357 2227 1212">
          <defs>
            <pattern id="grid" patternUnits="userSpaceOnUse" x="841" y="393.300" width="60.580" height="60.580">
              <path d="M30.300 0v60.580M0 30.300h60.580" stroke="#eeeeee" stroke-width="1"/>
              <path d="M1 0v60.580M0 1h60.580" stroke="#e0e0e0" stroke-width="1.500"/>
            </pattern>
            <g id="pill"><path d="M-12 0v-14a12 12 0 0 1 24 0V0Z" fill="#fff" stroke="#ff8080" stroke-width="4.500"/><path d="M-12 0v14a12 12 0 0 0 24 0V0Z" fill="#fff" stroke="#4a7fff" stroke-width="4.500"/><path d="M-10 0h20" stroke="#fff" stroke-width="4"/></g>
          </defs>
          <rect x="782" y="300" width="1796" height="938" fill="#fff"/>
          <rect x="841" y="340" width="1677" height="839" fill="url(#grid)"/>
          <path d="M2518 340v839M841 1179h1677" stroke="#dedede" fill="none"/>

          <g class="ln">
            <path class="lb-a" d="M918 541h382l50 50"/>
            <path class="lb-a" d="M2068 658l75 67h307"/>
            <path class="l-brown" d="M1236 541v-16c0-40 26-72 74-72h685c45 0 73 32 73 72"/>
            <path class="l-pink" d="M1216 541v-31c0-45 34-76 84-76h560c45 0 75-29 75-64v-30"/>
            <path class="l-blue" d="M1236 541v-16c0-40 26-72 74-72h685c45 0 73 32 73 72v200"/>
            <path class="l-org" d="M1490 340l190 190"/>
            <path class="l-lav" d="M1696 340v520"/>
            <path class="l-red" d="M1683 560v40"/>
            <path class="l-blue" d="M1236 700v90c0 40 24 72 64 72h625"/>
            <path class="l-red" d="M1374 700v265l-223 203"/>
            <path class="l-lav" d="M1696 862l24 53 45 85 40 83 50 101"/>
            <path class="l-navy" d="M2119 340v243c0 30-20 60-51 75"/>
            <path class="l-navy" d="M1885 700v180c0 35 18 60 45 75"/>
            <path class="l-org2" d="M1070 710c-40 15-70 50-70 110v285"/>
          </g>

          <g class="st-g"><circle cx="918" cy="541" r="14"/><circle cx="1017" cy="541" r="14"/><circle cx="1115" cy="541" r="14"/><circle cx="1300" cy="541" r="14"/><circle cx="2143" cy="725" r="14"/><circle cx="2246" cy="725" r="14"/><circle cx="2349" cy="725" r="14"/><circle cx="2450" cy="725" r="14"/></g>
          <g class="st-o"><circle cx="1539" cy="389" r="13"/><circle cx="1935" cy="390" r="13"/></g>
          <g class="st-o2"><circle cx="1021" cy="735" r="14"/><circle cx="1115" cy="718" r="14"/><circle cx="1000" cy="818" r="13.500"/><circle cx="1000" cy="910" r="13.500"/><circle cx="1000" cy="1017" r="13.500"/><circle cx="1000" cy="1105" r="13.500"/></g>
          <g class="st-r"><circle cx="1213" cy="720" r="14"/><circle cx="1374" cy="782" r="13.500"/><circle cx="1374" cy="965" r="13.500"/><circle cx="1301" cy="1033" r="13.500"/><circle cx="1228" cy="1101" r="13.500"/><circle cx="1151" cy="1168" r="13.500"/></g>
          <g class="st-b"><circle cx="1236" cy="802" r="13"/><circle cx="1295" cy="862" r="13"/><circle cx="1811" cy="862" r="13"/></g>
          <g class="st-br"><circle cx="1476" cy="862" r="13"/><circle cx="1587" cy="862" r="13"/><circle cx="2068" cy="725" r="14"/></g>
          <g class="st-l"><circle cx="1696" cy="770" r="13"/><circle cx="1720" cy="915" r="13"/><circle cx="1765" cy="1000" r="13"/><circle cx="1805" cy="1083" r="13"/><circle cx="1855" cy="1184" r="13"/></g>
          <g class="st-n"><circle cx="2119" cy="424" r="13.500"/><circle cx="2119" cy="503" r="13.500"/><circle cx="2119" cy="582" r="13.500"/><circle cx="1885" cy="742" r="13"/><circle cx="2368" cy="953" r="13"/></g>

          <use href="#pill" x="1321" y="442"/><use href="#pill" x="1449" y="442"/><use href="#pill" x="1696" y="442"/><use href="#pill" x="1817" y="442"/>
          <rect x="1666" y="525" width="50" height="32" rx="16" fill="#fff" stroke="#ff8080" stroke-width="4.500"/><path d="M1691 527h9a14 14 0 0 1 0 28h-9" fill="none" stroke="#8a9dff" stroke-width="4.500"/>

          <g class="x-o"><circle cx="1587" cy="438" r="23"/><circle cx="1587" cy="438" r="12"/></g>
          <g class="x-b"><circle cx="1225" cy="541" r="25"/><circle cx="1225" cy="541" r="13"/></g>
          <g class="x-r"><circle cx="1374" cy="862" r="23"/><circle cx="1374" cy="862" r="12"/></g>
          <g class="x-l"><circle cx="1696" cy="862" r="23"/><circle cx="1696" cy="862" r="12"/></g>
          <path d="M1696 852l9 10-9 10-9-10Z" fill="#ffe680" stroke="#666" stroke-width="1"/>
          <g class="x-n"><circle cx="1884" cy="862" r="23"/><circle cx="1884" cy="862" r="12"/><circle cx="2068" cy="658" r="23"/><circle cx="2068" cy="658" r="13"/></g>

          <rect x="1035" y="1020" width="65" height="62" rx="10" fill="#ff8080"/>
          <path d="M1067.500 1027c2.500 0 3 6 3 13l16 11v7l-16-6-1 14 6 5v4l-8-3-8 3v-4l6-5-1-14-16 6v-7l16-11c0-7 .5-13 3-13Z" fill="#fff"/>
          <g class="badge"><rect class="bd-pink" x="960" y="1140" width="74" height="42" rx="8"/><text x="997" y="1168">L1</text><rect class="bd-blue" x="1260" y="730" width="74" height="46" rx="8"/><text x="1297" y="762">L6</text><rect class="bd-lav" x="1879" y="1117" width="74" height="42" rx="8"/><text x="1916" y="1145">L5</text><rect class="bd-navy" x="2390" y="896" width="74" height="39" rx="8"/><text x="2427" y="922">L4</text></g>

          <g class="lb">
            <text x="1994" y="396">역 이름</text><text x="2181" y="432">역 이름</text><text x="2181" y="510">역 이름</text><text x="2181" y="588">역 이름</text>
            <text x="1360" y="546">역 이름</text><text x="1611" y="544">역 이름</text>
            <text x="1439" y="756">역 이름</text><text x="1435" y="788">역 이름</text><text x="1757" y="777">역 이름</text><text x="1173" y="804">역 이름</text>
            <text x="1587" y="831">역 이름</text><text x="1476" y="909">역 이름</text><text x="1658" y="916">역 이름</text><text x="1811" y="907">역 이름</text><text x="1243" y="866">역 이름</text>
            <text x="1704" y="1002">역 이름</text><text x="1743" y="1087">역 이름</text><text x="1793" y="1187">역 이름</text><text x="1437" y="971">역 이름</text><text x="1360" y="1039">역 이름</text><text x="1291" y="1107">역 이름</text><text x="1213" y="1174">역 이름</text>
            <g class="big"><text x="1587" y="495">역 이름</text><text x="1376" y="819">역 이름</text><text x="1697" y="819">역 이름</text><text x="1880" y="819">역 이름</text><text x="2145" y="666">역 이름</text></g>
            <text transform="rotate(50 967 768)" x="967" y="776">역 이름</text><text transform="rotate(50 967 860)" x="967" y="868">역 이름</text><text transform="rotate(50 967 968)" x="967" y="976">역 이름</text><text transform="rotate(50 967 1055)" x="967" y="1063">역 이름</text>
            <text transform="rotate(50 873 492)" x="873" y="500">역 이름</text><text transform="rotate(50 973 492)" x="973" y="500">역 이름</text><text transform="rotate(50 1072 490)" x="1072" y="498">역 이름</text><text transform="rotate(50 1175 482)" x="1175" y="490">역 이름</text>
            <text transform="rotate(50 1272 385)" x="1272" y="393">역 이름</text><text transform="rotate(50 1410 385)" x="1410" y="393">역 이름</text><text transform="rotate(50 1555 360)" x="1555" y="368">역 이름</text><text transform="rotate(50 1680 388)" x="1680" y="396">역 이름</text>
            <text transform="rotate(90 1822 372)" x="1822" y="380">역 이름</text>
            <text transform="rotate(50 1763 520)" x="1763" y="528">역 이름</text><text transform="rotate(50 1866 525)" x="1866" y="533">역 이름</text><text transform="rotate(50 1945 525)" x="1945" y="533">역 이름</text><text transform="rotate(50 1155 565)" x="1155" y="573">역 이름</text>
            <text transform="rotate(50 2390 789)" x="2390" y="797">역 이름</text><text transform="rotate(50 2490 789)" x="2490" y="797">역 이름</text><text transform="rotate(50 2407 1006)" x="2407" y="1014">역 이름</text>
          </g>

          <path class="sel-dash" d="M1230 791h77v77h-77Z"/>
          <g class="sel-h"><rect x="1222" y="783" width="16" height="16"/><rect x="1259" y="783" width="16" height="16"/><rect x="1299" y="783" width="16" height="16"/><rect x="1222" y="823" width="16" height="16"/><rect x="1299" y="823" width="16" height="16"/><rect x="1222" y="860" width="16" height="16"/><rect x="1259" y="860" width="16" height="16"/><rect x="1299" y="860" width="16" height="16"/></g>
          <path d="M1186 822a10 10 0 1 0 3 8M1186 816v7h7" fill="none" stroke="#3aa0ff" stroke-width="1.500"/>
        </svg>
        <i class="vbar"></i>
        <div class="ai-pill"><svg width="36" height="36"><use href="#i-magic"/></svg><i class="ai-sep"></i><svg width="40" height="40"><use href="#i-star"/></svg></div>
      </div>
    </div>
    <div class="hbar"><i></i></div>
    <div class="colors">
      <span class="col-fill"><svg width="24" height="29"><use href="#i-nib"/></svg><i class="caret"></i></span>
      <div class="swatches">
        <i style="background:#a9111f"></i><i style="background:#c90c36"></i><i style="background:#ea4566"></i><i style="background:#f5678a"></i><i style="background:#f99db0"></i>
        <i style="background:#2a7f99"></i><i style="background:#38a8c0"></i><i style="background:#41c1de"></i><i style="background:#63dcf1"></i><i style="background:#aaf0fc"></i>
        <i style="background:#f55a26"></i><i style="background:#ff8139"></i><i style="background:#ff9a1f"></i><i style="background:#ffb812"></i><i style="background:#ffc65e"></i>
        <i style="background:#0f9480"></i><i style="background:#16b39b"></i><i style="background:#17cbb0"></i><i style="background:#63d8c6"></i><i style="background:#85eedd"></i>
        <i style="background:#9c2c63"></i><i style="background:#c64e8e"></i><i style="background:#e268a8"></i><i style="background:#f98acb"></i><i style="background:#efc1dd"></i>
        <i style="background:#5f8511"></i><i style="background:#789f26"></i><i style="background:#9abb26"></i><i style="background:#b1d04a"></i><i style="background:#d0df91"></i>
        <i style="background:#1d26ae"></i><i style="background:#3841d6"></i><i style="background:#6d48f5"></i><i style="background:#9570ff"></i><i style="background:#ae94f7"></i>
        <i style="background:#ffcb00"></i><i style="background:#ffdd2b"></i><i style="background:#f4ec2e"></i><i style="background:#fbf650"></i><i style="background:#fdfe7f"></i>
        <i style="background:#9c52e0"></i><i style="background:#c255e8"></i><i style="background:#d475f8"></i><i style="background:#bb8bfa"></i><i style="background:#d8a6fe"></i>
        <i style="background:#2f7f49"></i><i style="background:#3ea35a"></i><i style="background:#52b07c"></i><i style="background:#66bf8a"></i><i style="background:#93d9ad"></i>
        <i style="background:#ec3525"></i><i style="background:#ff4b3a"></i><i style="background:#ff6565"></i><i style="background:#ff7b7b"></i><i style="background:#ff9590"></i>
        <i style="background:#2342a5"></i><i style="background:#2f59d3"></i><i style="background:#336df2"></i><i style="background:#6490ff"></i><i style="background:#89aef0"></i>
        <i style="background:#702e00"></i><i style="background:#943600"></i><i style="background:#a8422a"></i><i style="background:#d06044"></i><i style="background:#e27a5a"></i>
        <i style="background:#1a8cdd"></i><i style="background:#2ea0f5"></i><i style="background:#43b3fd"></i><i style="background:#3ccbfb"></i><i style="background:#67e5ff"></i>
        <i style="background:#794f36"></i><i style="background:#915f45"></i><i style="background:#b17250"></i><i style="background:#d48a60"></i><i style="background:#f59b6e"></i>
        <i style="background:#8a7f74"></i><i style="background:#b0a998"></i><i style="background:#cdc9b6"></i><i style="background:#e3dfcf"></i><i style="background:#f3efdc"></i>
        <i style="background:#1a1a1a"></i><i style="background:#333333"></i><i style="background:#4d4d4d"></i><i style="background:#666666"></i><i style="background:#808080"></i>
        <i style="background:#b3b3b3"></i><i style="background:#c7c7c7"></i><i style="background:#d8d8d8"></i><i style="background:#e6e6e6"></i><i style="background:#f3f3f3"></i>
      </div>
    </div>
  </section>
</main>

<footer class="status">
  <div class="sc sc1"><svg width="34" height="22" viewBox="0 0 34 22"><path d="M1 1v20M33 1v20" stroke="#333" stroke-width="2"/><rect x="7" y="2" width="20" height="18" fill="none" stroke="#333" stroke-width="2"/></svg></div>
  <div class="sc sc2"><span>페이지-1</span><i class="caret"></i></div>
  <div class="sc sc3"><span class="plus"></span></div>
  <div class="sc sc4"><strong>페이지-1</strong></div>
  <div class="sc sc5"><span>형태 수: 120</span></div>
  <div class="sc sc6"><span>모양 ID: 101</span></div>
  <div class="sc sc7">
    <svg width="36" height="32" viewBox="0 0 36 32"><path d="M18 1 33 13 18 23 3 13ZM3 18l15 12 15-12" fill="none" stroke="#333" stroke-width="2.200"/></svg>
    <i class="caret"></i>
    <svg class="sb-focus" width="28" height="30" viewBox="0 0 28 30"><path d="M8 1H1v28h7M20 1h7v28h-7" fill="none" stroke="#333" stroke-width="2.400"/><rect x="10" y="9" width="8" height="12" fill="none" stroke="#333" stroke-width="2"/></svg>
    <span class="sb-ft">집중</span>
    <svg class="sb-play" width="32" height="32" viewBox="0 0 32 32"><circle cx="16" cy="16" r="14.500" fill="none" stroke="#333" stroke-width="2"/><path d="M13 9l9 7-9 7Z" fill="none" stroke="#333" stroke-width="2"/></svg>
  </div>
  <div class="sc sc8">
    <span class="zm-minus"></span>
    <div class="slider"><i class="sl-fill"></i><i class="sl-knob"></i></div>
    <span class="plus zm-plus"></span>
    <span class="zm-val">80%</span>
    <i class="caret"></i>
  </div>
  <div class="sc sc9"><svg width="28" height="30" viewBox="0 0 28 30"><path d="M8 1H1v6M20 1h7v6M8 29H1v-6M20 29h7v-6" fill="none" stroke="#333" stroke-width="2.400"/><rect x="8" y="10" width="12" height="10" fill="none" stroke="#333" stroke-width="2"/></svg></div>
</footer>

<!-- floating mini toolbar over the canvas -->
<div class="floatbar">
  <div class="fb-sec sec-ai"><div class="fb-item"><span class="fb-ic"><svg width="40" height="40"><use href="#i-star"/></svg></span><span class="fb-l lat">Edraw AI</span></div></div>
  <div class="fb-sec sec-var"><div class="fb-item"><span class="fb-ic"><svg width="32" height="38"><use href="#i-var"/></svg></span><span class="fb-l">그래픽 변수</span></div></div>
  <div class="fb-sec sec-font">
    <div class="fb-row">
      <div class="fld ff1"><svg class="gs" width="28" height="30"><use href="#i-search"/></svg><span>Arial</span><i class="caret"></i></div>
      <div class="fld ff2"><span>12</span><i class="caret"></i></div>
    </div>
    <div class="fb-row fb-fmt">
      <b class="fmt">B</b><i class="fmt f-i">I</i><svg width="28" height="26"><use href="#i-align"/></svg><span class="f-ab">ab</span><span class="f-a">A</span>
    </div>
  </div>
  <div class="fb-sec sec-paint"><div class="fb-item"><span class="fb-ic"><svg width="32" height="34"><use href="#i-brush"/></svg></span><span class="fb-l">서식 복사</span></div></div>
  <div class="fb-sec sec-style">
    <div class="fb-item"><span class="fb-ic"><svg width="34" height="34"><use href="#i-style"/></svg></span><span class="fb-l">스타일</span></div>
    <div class="fb-item"><span class="fb-ic"><svg width="34" height="36"><use href="#i-fillf"/></svg></span><span class="fb-l">채우기</span></div>
    <div class="fb-item"><span class="fb-ic"><svg width="34" height="36"><use href="#i-linef"/></svg></span><span class="fb-l">선</span></div>
  </div>
  <div class="fb-sec sec-order">
    <div class="fb-item"><span class="fb-ic"><svg width="32" height="34"><use href="#i-front"/></svg></span><span class="fb-l">맨 앞으로<br>가져오기</span></div>
    <div class="fb-item off"><span class="fb-ic"><svg width="32" height="34"><use href="#i-back2"/></svg></span><span class="fb-l">맨 뒤로<br>보내기</span></div>
    <div class="fb-item fb-rep"><span class="fb-ic"><svg width="34" height="34"><use href="#i-replace"/></svg></span><span class="fb-l">대체하기</span></div>
    <svg class="pin" width="20" height="24"><use href="#i-pin"/></svg>
  </div>
</div>

<!-- replacement-shape popup -->
<div class="popup">
  <div class="tiles pop-tiles">
    <div class="pt"><svg><use href="#s-l1"/></svg></div>
    <div class="pt on"><svg><use href="#s-l2"/></svg></div>
    <div class="pt"><svg><use href="#s-l3"/></svg></div>
    <div class="pt"><svg><use href="#s-l4"/></svg></div>
    <div class="pt"><svg><use href="#s-l5"/></svg></div>
    <div class="pt"><svg><use href="#s-l6"/></svg></div>
    <div class="pt"><svg><use href="#s-l7"/></svg></div>
    <div class="pt"><svg><use href="#s-l8"/></svg></div>
    <div class="pt"><svg><use href="#s-c"/></svg></div>
    <div class="pt"><svg><use href="#s-c"/></svg></div>
    <div class="pt"><svg><use href="#s-c"/></svg></div>
    <div class="pt"><svg><use href="#s-c"/></svg></div>
    <div class="pt"><svg><use href="#s-c"/></svg></div>
    <div class="pt"><svg><use href="#s-ph"/></svg></div>
    <div class="pt"><svg><use href="#s-ph"/></svg></div>
    <div class="pt"><svg><use href="#s-pv"/></svg></div>
    <div class="pt"><svg><use href="#s-pv"/></svg></div>
    <div class="pt"><svg><use href="#s-ring"/></svg></div>
    <div class="pt"><svg><use href="#s-ring"/></svg></div>
    <div class="pt"><svg><use href="#s-ring"/></svg></div>
    <div class="pt"><svg><use href="#s-ring"/></svg></div>
    <div class="pt"><svg><use href="#s-key"/></svg></div>
    <div class="pt"><svg><use href="#s-key"/></svg></div>
    <div class="pt"><svg><use href="#s-metro"/></svg></div>
    <div class="pt"><svg><use href="#s-plane"/></svg></div>
    <div class="pt"><svg><use href="#s-rail"/></svg></div>
    <div class="pt"><svg><use href="#s-bus"/></svg></div>
  </div>
  <div class="tip">지하철 선로</div>
</div>

<!-- red call-out annotations drawn over the screenshot -->
<i class="red red-a"></i>
<i class="red red-b"></i>
<i class="red red-c"></i>
<svg class="red-arrow" width="140" height="140" viewBox="0 0 140 140"><path d="M5 5 112 112" stroke="#e81d1d" stroke-width="6"/><path d="M129 132 103 122 120 102Z" fill="#e81d1d"/></svg>
</body>
</html>
```
FILE: styles.css
```css
* { box-sizing: border-box; }
html, body { margin: 0; padding: 0; }
body {
  position: relative;
  width: 2792px; height: 1686px; overflow: hidden;
  display: flex; flex-direction: column;
  font-family: "Liberation Sans", "Noto Sans CJK KR", sans-serif;
  font-size: 24px; line-height: 1; color: #333; background: #fff;
  white-space: nowrap;
}
i { font-style: normal; }
svg { display: block; flex: none; }
.defs { position: absolute; width: 0; height: 0; }
.caret { display: block; flex: none; width: 0; height: 0; border-left: 6px solid transparent; border-right: 6px solid transparent; border-top: 8px solid #777; }

/* title bar */
.titlebar { height: 58px; flex: none; display: flex; background: #f2f4f9; }
.tb-left { width: 772px; display: flex; align-items: center; background: #e1e3e7; border-bottom-right-radius: 16px; padding-left: 24px; }
.app-logo { margin-top: -8px; }
.app-name { margin-left: 8px; width: 276px; color: #222; font-size: 23.600px; }
.pro { width: 60px; height: 32px; border-radius: 8px; background: linear-gradient(135deg, #ffdf8e, #ffb52a); color: #7a5200; display: flex; align-items: center; justify-content: center; }
.tb-sep { width: 1px; height: 32px; background: #cfd1d6; margin-left: 35px; }
.doc-tab { display: flex; align-items: center; height: 100%; position: relative; }
.doc-tab span { margin-left: 10px; font-size: 25px; }
.doc-first { margin-left: 26px; width: 294px; }
.doc-active { width: 319px; padding-left: 26px; }
.dot { position: absolute; width: 12px; height: 12px; border-radius: 50%; background: #ff3b3b; top: 20px; }
.doc-first .dot { left: 264px; }
.doc-active .dot { left: 290px; }
.tb-right { flex: 1; background: #e1e3e7; border-bottom-left-radius: 16px; display: flex; align-items: center; position: relative; }
.newtab { margin-left: 28px; }
.avatar { position: absolute; left: 1475px; top: -3px; width: 50px; height: 50px; border-radius: 50%; background: #7a8f9c; border: 2px solid #ffd08a; color: #fff; display: flex; align-items: center; justify-content: center; font-size: 28px; }
.vip { position: absolute; right: -8px; bottom: -2px; width: 22px; height: 22px; background: linear-gradient(#ffd24d, #ffa51f); clip-path: polygon(25% 0, 75% 0, 100% 40%, 50% 100%, 0 40%); }
.win-min { position: absolute; left: 1570px; top: 22px; width: 22px; height: 2px; background: #222; }
.win-max { position: absolute; left: 1634px; top: 14px; width: 18px; height: 20px; border: 2px solid #222; box-shadow: 5px -5px 0 -2px #e1e3e7, 5px -5px 0 0 #222; }

/* menu bar */
.menubar { height: 64px; flex: none; background: #f2f4f9; display: flex; align-items: center; padding-left: 18px; color: #222; position: relative; font-size: 25px; }
.nb-menu { margin-left: 45px; }
.nb-file { margin-left: 12px; width: 46px; }
.nb-sep { width: 1px; height: 32px; background: #d6d8dd; }
.sep-a { margin-left: 34px; }
.nb-undo { margin-left: 39px; }
.c-undo { margin-left: 15px; }
.nb-redo { margin-left: 34px; color: #aaa; }
.nb-save { margin-left: 39px; }
.nb-print { margin-left: 34px; }
.nb-export { margin-left: 37px; }
.c-export { margin-left: 13px; }
.nb-more { margin-left: 38px; }
.sep-b { margin-left: 41px; }
.tabs { margin-left: 54px; display: flex; gap: 66px; height: 100%; }
.tab { display: flex; align-items: center; position: relative; height: 100%; letter-spacing: .4px; }
.tab.on { color: #0a7dff; font-weight: 700; font-size: 26px; letter-spacing: 0; }
.tab.on::after { content: ""; position: absolute; left: 0; right: 0; bottom: 1px; height: 2px; background: #0a7dff; }
.hot { position: absolute; left: 27px; top: 4px; width: 48px; height: 24px; border-radius: 10px 12px 12px 0; background: linear-gradient(90deg, #7a3cff, #2f8cff); color: #fff; font-size: 21px; font-style: italic; font-weight: 400; display: flex; align-items: center; justify-content: center; }
.nb-right { position: absolute; left: 2308px; top: 0; height: 100%; display: flex; align-items: center; color: #333; }
.nb-t1 { margin-left: 7px; width: 46px; }
.nb-share { margin-left: 39px; }
.nb-t2 { margin-left: 8px; width: 92px; }
.nb-gear { margin-left: 23px; }
.nb-t3 { margin-left: 9px; width: 46px; }
.help { margin-left: 48px; width: 28px; height: 28px; border: 2px solid #333; border-radius: 50%; display: flex; align-items: center; justify-content: center; font-size: 20px; position: relative; }
.help-dot { position: absolute; left: 31px; top: -10px; width: 12px; height: 12px; border-radius: 50%; background: #ff3b3b; }
.c-help { margin-left: 9px; }

/* ribbon */
.ribbon { height: 199px; flex: none; display: flex; padding: 20px 0 19px; background: #fff; border-bottom: 2px solid #eceef1; }
.rg { height: 160px; flex: none; display: flex; flex-direction: column; border-right: 1px solid #eeeeee; position: relative; }
.rg-body { height: 136px; display: flex; flex-direction: column; gap: 22px; font-size: 25px; }
.rg-label { height: 24px; margin-top: 0; display: flex; justify-content: center; align-items: center; color: #8a8a8a; line-height: 24px; }
.rw { height: 47px; display: flex; align-items: center; flex: none; }
.rg-clip { width: 164px; }
.rg-font { width: 740px; }
.rg-tools { width: 392px; }
.rg-style { width: 777px; }
.rg-arr { width: 519px; }
.rg-rep { width: 189px; }
.rg-clip .rg-label { padding-right: 12px; }
.cl-a { margin-left: 17px; }
.cl-b { margin-left: 32px; }
.cl-c { margin-left: 34px; }
.cl-car { margin-left: 6px; }
.launch { position: absolute; right: 24px; bottom: 2px; }
.launch.l2 { right: 24px; }

.rg-font .rw { padding-left: 31px; }
.fld { height: 47px; border: 1px solid #e8e8e8; border-radius: 6px; display: flex; align-items: center; flex: none; position: relative; color: #222; font-size: 24px; }
.fld span { padding-top: 2px; }
.fld .caret { position: absolute; right: 2px; top: 17px; }
.fld-font { width: 332px; padding-left: 14px; }
.fld-font span { margin-left: 18px; }
.gs { color: #cfcfcf; }
.fld-size { width: 128px; padding-left: 13px; margin-left: 16px; }
.glyph { font-size: 36px; color: #444; position: relative; width: 34px; }
.glyph sup { position: absolute; left: 19px; top: -7px; font-size: 24px; font-weight: 700; line-height: 1; }
.g-ap { margin-left: 23px; }
.g-am { margin-left: 29px; }
.g-al { margin-left: 31px; }
.g-alc { margin-left: 10px; }
.fmt { width: 36px; text-align: center; font-family: "Liberation Sans", sans-serif; font-size: 34px; color: #444; flex: none; position: relative; }
.rw-fmt .fmt { width: 56px; }
.rw-fmt { padding-left: 21px !important; }
.f-i { font-style: italic; font-weight: 700; font-family: "Liberation Serif", serif; }
.f-u { text-decoration-thickness: 2px; font-size: 28px; }
.f-s { text-decoration-thickness: 2px; font-size: 28px; }
.f-x { font-size: 30px; }
.f-x sup, .f-x sub { font-size: 14px; line-height: 0; }
.f-t { margin: 0 6px 0 16px; }
.car-t { margin-left: 4px; border-top-color: #bbb; }
.ic-ls { margin-left: 17px; }
.car-ls { margin-left: 7px; }
.ic-li { margin-left: 23px; }
.car-li { margin-left: 7px; }
.f-ab { font-size: 30px; color: #444; width: 36px; text-align: center; flex: none; }
.rw-fmt .f-ab { margin-left: 21px; }
.car-ab { margin-left: 0; }
.f-a { font-size: 34px; color: #444; border-bottom: 6px solid #222; width: 30px; text-align: center; flex: none; line-height: 31px; height: 36px; }
.rw-fmt .f-a { margin-left: 30px; }
.car-a { margin-left: 7px; }

.tool { display: flex; align-items: center; height: 47px; flex: none; }
.tool-sel, .tool-t { width: 136px; padding: 0 5px 0 11px; margin-left: 24px; border-radius: 4px; }
.tool-sel { background: #f5f5f5; gap: 8px; }
.tool-sel .caret { margin-left: auto; }
.tool-t { gap: 12px; }
.tool-t .caret { margin-left: 1px; }
.tool-b { margin-left: 49px; }
.ibox { width: 41px; display: flex; justify-content: center; margin-right: 9px; }
.tool-b .caret { margin-left: 14px; }

.st-body { flex-direction: row; gap: 32px; padding-left: 31px; }
.gallery { width: 544px; height: 115px; border: 1px solid #e8e8e8; border-radius: 8px; display: flex; align-items: center; padding-left: 23px; gap: 16px; position: relative; flex: none; }
.abc { width: 64px; height: 64px; border-radius: 4px; border: 1px solid; display: flex; align-items: center; justify-content: center; color: #111; font-size: 24px; flex: none; }
.a1 { border-color: #7fc8b5; } .a2 { border-color: #7f9ad6; } .a3 { border-color: #7f88c8; }
.a4 { border-color: #e29a9a; } .a5 { border-color: #e0c47f; } .a6 { border-color: #a5bcdc; }
.gal-arrows { position: absolute; left: 522px; top: 14px; height: 88px; width: 12px; display: flex; flex-direction: column; justify-content: space-between; }
.gal-arrows i { display: block; width: 0; height: 0; border-left: 6px solid transparent; border-right: 6px solid transparent; }
.gal-arrows .up { border-bottom: 7px solid #777; }
.gal-arrows .dn { border-top: 7px solid #777; }
.gal-arrows .dm { border-top: 7px solid #777; box-shadow: 0 -6px 0 -4px #777; }
.fls { display: flex; flex-direction: column; height: 120px; gap: 3px; }
.fl { height: 37px; display: flex; align-items: center; }
.fl svg { width: 34px; }
.fl span { margin-left: 11px; }
.fl .caret { margin-left: 11px; }

.rg-arr .rw { padding-left: 36px; }
.at { display: flex; align-items: center; flex: none; height: 47px; }
.at svg { width: 36px; }
.at span { margin-left: 9px; }
.at .caret { margin-left: 12px; }
.at1 { width: 151px; }
.at2 { width: 153px; }
.off { color: #aaa; }
.off .caret { border-top-color: #bbb; }

.rep-body { align-items: center; gap: 0; padding-top: 8px; }
.rep-l1 { margin-top: 12px; line-height: 30px; }
.rep-l2 { position: relative; line-height: 30px; }
.rep-l2 .caret { position: absolute; left: 84px; top: 12px; }

/* main */
.main { height: 1305px; flex: none; display: flex; }
.rail { width: 96px; flex: none; border-right: 1px solid #e6e6e6; display: flex; flex-direction: column; align-items: center; padding: 29px 15px 0 0; gap: 32px; background: #fff; }
.rail-col { margin-bottom: -4px; }
.rail-i { width: 64px; height: 96px; flex: none; display: flex; flex-direction: column; align-items: center; color: #222; font-size: 25px; }
.rail-ic { width: 64px; height: 64px; border-radius: 8px; display: flex; align-items: center; justify-content: center; flex: none; }
.rail-i > span:last-child { line-height: 32px; }
.rail-i.on { color: #0a7dff; }
.rail-i.on .rail-ic { background: #e8f3ff; }

.panel { width: 433px; flex: none; border-right: 1px solid #e6e6e6; display: flex; flex-direction: column; background: #fff; }
.p-head { height: 98px; flex: none; padding: 0 32px; display: flex; align-items: center; justify-content: space-between; }
.p-head strong { color: #111; }
.ai-sym { display: flex; align-items: center; gap: 7px; color: #0a7dff; letter-spacing: .5px; }
.p-search { height: 62px; flex: none; margin: 0 32px; border: 1px solid #e8e8e8; border-radius: 8px; display: flex; align-items: center; padding-left: 19px; gap: 15px; color: #aaa; letter-spacing: 1px; }
.p-tools { height: 89px; flex: none; border-bottom: 1px solid #e6e6e6; padding: 18px 32px 9px; display: flex; justify-content: space-between; align-items: flex-start; }
.fold, .manage { height: 62px; display: flex; align-items: center; gap: 10px; color: #222; letter-spacing: 1.5px; }
.manage { gap: 12px; letter-spacing: 0; }
.p-scroll { height: 944px; flex: none; padding: 8px 32px 0; overflow: hidden; position: relative; border-bottom: 1px solid #e6e6e6; }
.tiles { display: grid; grid-template-columns: repeat(4, 80px); grid-auto-rows: 80px; gap: 16px; }
.tile { width: 80px; height: 80px; background: #f6f8fc; border-radius: 8px; position: relative; }
.tile svg { width: 80px; height: 80px; }
.tile.d::before { content: ""; position: absolute; left: 2px; top: 2px; width: 8px; height: 8px; background: #ffe066; border: 1px solid #8a7a30; transform: rotate(45deg); }
.tiny { font-size: 6.500px; fill: #bbb; text-anchor: middle; }
.sec { height: 88px; padding-top: 6px; display: flex; align-items: center; color: #222; letter-spacing: 1px; }
.tri { width: 0; height: 0; border-left: 6px solid transparent; border-right: 6px solid transparent; border-top: 7px solid #777; margin: 0 11px 0 2px; }
.p-bar { position: absolute; right: 2px; top: 496px; bottom: 0; width: 13px; border-radius: 7px; background: #e0e0e4; }
.p-foot { height: 112px; flex: none; padding: 24px 32px; }
.more { width: 100%; height: 64px; border: 0; border-radius: 6px; background: #0a7dff; color: #fff; font: inherit; letter-spacing: 1px; }

/* workspace */
.work { flex: 1; min-width: 0; display: flex; flex-direction: column; }
.ruler-top { height: 36px; flex: none; padding-left: 37px; border-bottom: 1px solid #e6e6e6; background: #fff; }
.rn { font-size: 19px; fill: #777; }
.rv text { text-anchor: end; }
.work-mid { height: 1212px; flex: none; display: flex; }
.canvas { flex: 1; position: relative; overflow: hidden; background: #ecebf1; }
.vbar { position: absolute; right: 2px; top: 408px; bottom: 2px; width: 15px; border-radius: 8px; background: #d0d1d3; }
.ai-pill { position: absolute; left: 1999px; top: 1103px; width: 178px; height: 75px; background: #fff; border-radius: 38px; box-shadow: 0 6px 14px rgba(60,60,90,.18); display: flex; align-items: center; padding-left: 28px; }
.ai-sep { width: 1px; height: 42px; background: #eee; margin: 0 22px 0 22px; }
.hbar { height: 25px; flex: none; background: #fff; padding: 2px 0 0 227px; border-bottom: 1px solid #e8e8e8; }
.hbar i { display: block; width: 1740px; height: 20px; border-radius: 10px; background: #d0d1d3; }
.colors { height: 32px; flex: none; display: flex; background: #fff; padding-left: 24px; }
.col-fill { width: 46px; display: flex; align-items: center; gap: 5px; }
.col-fill svg { width: 24px; }
.col-fill .caret { border-left-width: 5px; border-right-width: 5px; }
.swatches { display: flex; align-items: flex-start; padding-top: 1px; }
.swatches i { display: block; width: 22.600px; height: 30px; margin-right: 1.600px; border-radius: 2px; flex: none; }

/* diagram */
.ln path { fill: none; stroke-linejoin: round; }
.lb-a { stroke: #8cc0ff; stroke-width: 14; }
.l-pink { stroke: #ff8080; stroke-width: 14; }
.l-blue { stroke: #4a7fff; stroke-width: 14; }
.l-brown { stroke: #a88080; stroke-width: 16; }
.l-org { stroke: #ff9f1a; stroke-width: 14; }
.l-org2 { stroke: #ffb02e; stroke-width: 12; }
.l-lav { stroke: #8094ff; stroke-width: 12; }
.l-red { stroke: #ff6b6b; stroke-width: 12; }
.l-navy { stroke: #4355c8; stroke-width: 14; }
.st-g circle, .st-o circle, .st-o2 circle, .st-r circle, .st-b circle, .st-br circle, .st-l circle, .st-n circle { fill: #fff; stroke-width: 5; }
.st-g circle { stroke: #94d466; }
.st-o circle { stroke: #ff9f1a; }
.st-o2 circle { stroke: #ffb02e; }
.st-r circle { stroke: #ff6b6b; }
.st-b circle { stroke: #4a7fff; }
.st-br circle { stroke: #a88080; }
.st-l circle { stroke: #8094ff; }
.st-n circle { stroke: #4355c8; }
.x-o circle, .x-b circle, .x-r circle, .x-l circle, .x-n circle { fill: #fff; stroke-width: 5; }
.x-o circle { stroke: #ff9f1a; }
.x-b circle { stroke: #4a7fff; }
.x-r circle { stroke: #ff6b6b; }
.x-l circle { stroke: #8094ff; }
.x-n circle { stroke: #4355c8; }
.badge text { fill: #fff; font-size: 20px; text-anchor: middle; }
.bd-pink { fill: #ff8080; stroke: #d96a6a; }
.bd-blue { fill: #4a7fff; stroke: #3f6fe0; }
.bd-lav { fill: #8094ff; stroke: #6f82e0; }
.bd-navy { fill: #4355c8; }
.lb { font-size: 22px; fill: #444; text-anchor: middle; }
.big { font-size: 26px; }
.sel-dash { fill: none; stroke: #0a7dff; stroke-width: 1.500; stroke-dasharray: 5 4; }
.sel-h rect { fill: #fff; stroke: #0a7dff; stroke-width: 1.500; }

/* status */
.status { height: 60px; flex: none; background: #f2f4f9; display: flex; align-items: center; letter-spacing: .5px; color: #222; }
.sc { height: 44px; display: flex; align-items: center; flex: none; }
.sc1 { width: 81px; padding-left: 22px; border-right: 1px solid #dfe1e6; }
.sc2 { width: 257px; padding: 0 18px 0 35px; border-right: 1px solid #dfe1e6; letter-spacing: 2px; }
.sc2 .caret { margin-left: auto; }
.sc3 { width: 81px; justify-content: center; border-right: 1px solid #dfe1e6; }
.sc4 { width: 145px; justify-content: center; border-right: 1px solid #dfe1e6; color: #0a7dff; letter-spacing: 2px; }
.sc5 { margin-left: 1093px; width: 166px; padding-left: 19px; border-left: 1px solid #dfe1e6; }
.sc6 { width: 164px; padding-left: 17px; border-left: 1px solid #dfe1e6; }
.sc7 { width: 289px; padding-left: 23px; border-left: 1px solid #dfe1e6; }
.sc7 .caret { margin-left: 9px; }
.sb-focus { margin-left: 30px; }
.sb-ft { margin-left: 20px; font-size: 25px; }
.sb-play { margin-left: 23px; }
.sc8 { width: 429px; padding-left: 19px; border-left: 1px solid #dfe1e6; }
.sc8 .caret { margin-left: 14px; }
.zm-minus { width: 23px; height: 3px; background: #333; }
.slider { position: relative; width: 192px; height: 7px; margin-left: 22px; background: #fff; border-radius: 4px; flex: none; }
.sl-fill { position: absolute; left: 0; top: 0; width: 36px; height: 7px; border-radius: 4px; background: #444; }
.sl-knob { position: absolute; left: 30px; top: -8px; width: 22px; height: 23px; border-radius: 50%; background: #fff; border: 4px solid #444; }
.plus { display: block; width: 24px; height: 24px; position: relative; flex: none; }
.plus::before, .plus::after { content: ""; position: absolute; background: #222; }
.plus::before { left: 0; right: 0; top: 11px; height: 2px; }
.plus::after { top: 0; bottom: 0; left: 11px; width: 2px; }
.zm-plus { margin-left: 20px; }
.zm-val { margin-left: 31px; }
.sc9 { padding-left: 28px; border-left: 1px solid #dfe1e6; }

/* floating toolbar (over the canvas) */
.floatbar { position: absolute; left: 676px; top: 564px; width: 1377px; height: 159px; background: #fff; border: 1px solid #ececec; border-radius: 8px; display: flex; padding: 16px 0 15px; box-shadow: 0 2px 8px rgba(0,0,0,.06); color: #222; }
.fb-sec { height: 128px; display: flex; flex: none; border-right: 1px solid #efefef; }
.fb-item { display: flex; flex-direction: column; align-items: center; flex: none; }
.fb-ic { width: 64px; height: 64px; border-radius: 8px; display: flex; align-items: center; justify-content: center; flex: none; }
.fb-l { margin-top: 10px; line-height: 29px; text-align: center; }
.lat { font-size: 22px; }
.sec-ai { width: 111px; justify-content: center; padding-right: 6px; }
.sec-var { width: 155px; justify-content: center; }
.sec-font { width: 325px; flex-direction: column; padding-left: 22px; }
.fb-row { display: flex; align-items: center; gap: 13px; }
.ff1 { width: 178px; padding-left: 12px; }
.ff1 span { margin-left: 14px; }
.ff2 { width: 95px; padding-left: 9px; }
.fb-fmt { height: 66px; gap: 0; padding-top: 0; }
.fb-fmt .fmt { width: 46px; font-size: 30px; }
.fb-fmt .f-i { margin-left: 14px; }
.fb-fmt svg { width: 26px; margin-left: 23px; }
.fb-fmt .f-ab { margin: 0 0 6px 30px; width: 36px; }
.fb-fmt .f-a { margin-left: 26px; }
.sec-paint { width: 130px; justify-content: center; }
.sec-style { width: 265px; padding-left: 12px; }
.sec-style .fb-item { width: 83px; }
.sec-order { width: 390px; border-right: 0; padding-left: 15px; position: relative; }
.sec-order .fb-item { width: 109px; }
.off .fb-l { color: #aaa; }
.off .fb-ic { color: #b5b5b5; }
.sec-order .fb-rep { width: 64px; margin-left: 30px; }
.fb-rep .fb-ic { background: #f0f0f0; }
.pin { position: absolute; left: 356px; top: -7px; }

/* popup */
.popup { position: absolute; left: 1926px; top: 745px; width: 428px; height: 707px; background: #fff; border-radius: 12px; padding: 19px 28px 0 32px; box-shadow: 0 4px 14px rgba(40,40,70,.2); }
.pt { width: 80px; height: 80px; display: flex; align-items: center; justify-content: center; border: 1px solid transparent; border-radius: 4px; }
.pt svg { width: 70px; height: 70px; }
.pt.on { border-color: #0a7dff; }
.tip { position: absolute; left: 151px; top: 82px; width: 155px; height: 50px; background: #fff; border: 1px solid #eee; border-radius: 2px; display: flex; align-items: center; justify-content: center; color: #111; letter-spacing: 1px; }

/* red annotations */
.red { position: absolute; display: block; border: 6px solid #e81d1d; }
.red-a { left: 669px; top: 539px; width: 1377px; height: 199px; }
.red-b { left: 1880px; top: 565px; width: 152px; height: 138px; }
.red-c { left: 1912px; top: 739px; width: 454px; height: 728px; }
.red-arrow { position: absolute; left: 2020px; top: 620px; }
```
